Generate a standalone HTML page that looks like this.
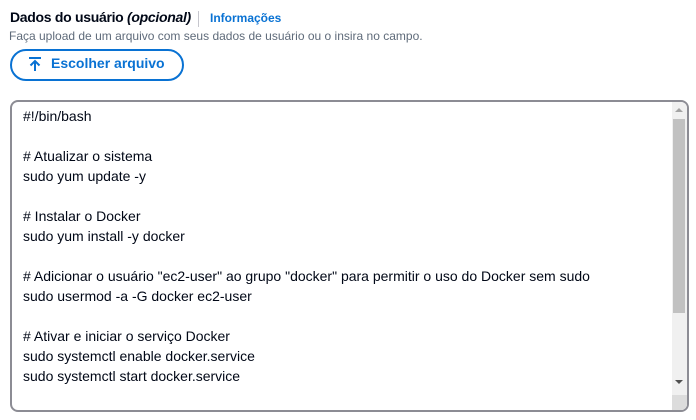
<html><head><style>
body{margin:0;width:696px;height:420px;background:#fff;font-family:"Liberation Sans",sans-serif;position:relative;overflow:hidden}
.a{position:absolute;white-space:nowrap}
</style></head><body>
<div class="a" style="left:10px;top:9px;font-size:14px;font-weight:bold;color:#000716;letter-spacing:-0.3px">Dados do usuário <i>(opcional)</i></div>
<div class="a" style="left:198px;top:11px;width:1px;height:16px;background:#c6c6cd"></div>
<div class="a" style="left:210px;top:11px;font-size:12px;font-weight:bold;color:#0972d3">Informações</div>
<div class="a" style="left:9px;top:29px;font-size:12px;color:#5f6b7a">Faça upload de um arquivo com seus dados de usuário ou o insira no campo.</div>
<div class="a" style="left:10px;top:49px;width:170px;height:28px;border:2px solid #0972d3;border-radius:16px"></div>
<svg class="a" style="left:27px;top:56px" width="16" height="16" viewBox="0 0 16 16"><path d="M2 2h12M8 15V5M3.5 9.5L8 5l4.5 4.5" stroke="#0972d3" stroke-width="2" fill="none"/></svg>
<div class="a" style="left:51px;top:55px;font-size:14px;font-weight:bold;color:#0972d3">Escolher arquivo</div>
<div class="a" style="left:10px;top:100px;width:675px;height:308px;border:2px solid #8c8c94;border-radius:8px;overflow:hidden">
<div class="a" style="left:11px;top:4px;font-size:14px;line-height:20px;color:#000716;white-space:pre">#!/bin/bash

# Atualizar o sistema
sudo yum update -y

# Instalar o Docker
sudo yum install -y docker

# Adicionar o usuário "ec2-user" ao grupo "docker" para permitir o uso do Docker sem sudo
sudo usermod -a -G docker ec2-user

# Ativar e iniciar o serviço Docker
sudo systemctl enable docker.service
sudo systemctl start docker.service</div>
<div class="a" style="right:0;top:0;width:15px;height:100%;background:#f0f0f0"></div>
<div class="a" style="right:2px;top:17px;width:12px;height:194px;background:#c1c1c1"></div>
<div class="a" style="right:4px;top:6px;width:0;height:0;border:4px solid transparent;border-bottom-color:#a3a3a3;border-top:0"></div>
<div class="a" style="right:4px;top:278px;width:0;height:0;border:4px solid transparent;border-top-color:#505050;border-bottom:0"></div>
<div class="a" style="right:0;bottom:0;width:15px;height:15px;background:#dcdcdc"></div>
</div>
</body></html>
